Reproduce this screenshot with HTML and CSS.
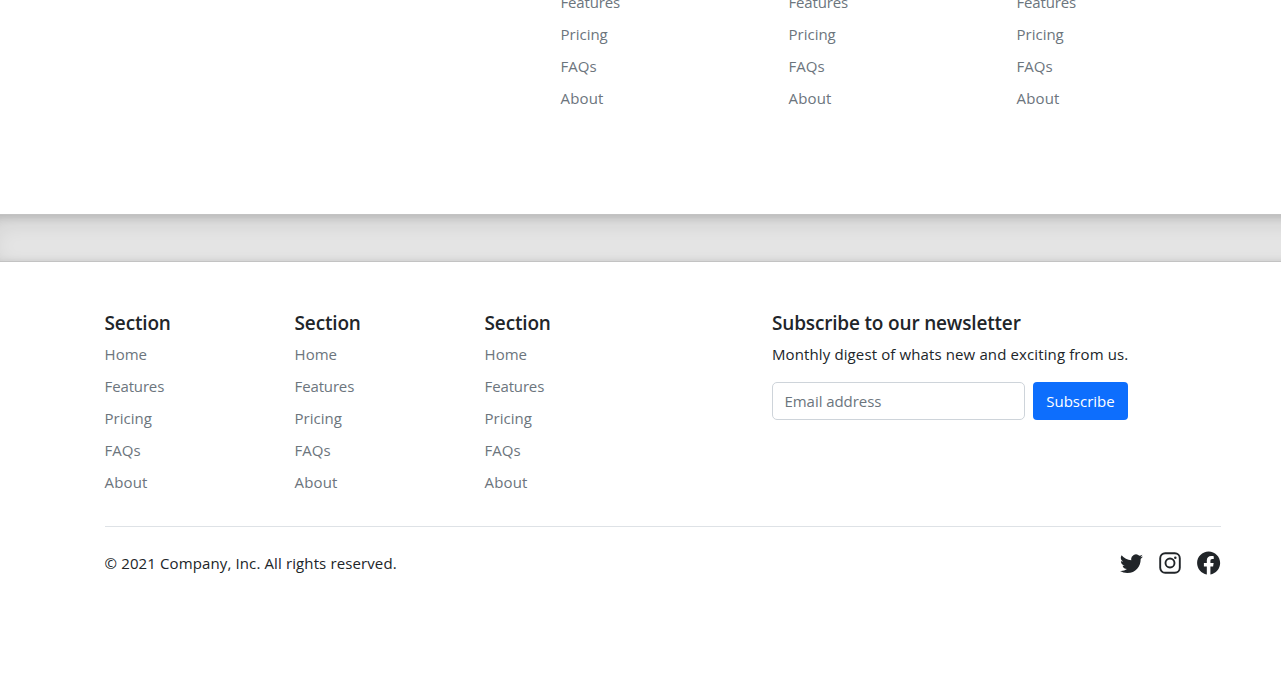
FILE: index.html
```html
<!DOCTYPE html>
<html lang="en">
<head>
<meta charset="utf-8">
<title>Footers</title>
<link rel="stylesheet" href="styles.css">
</head>
<body>
<section class="footer-top">
  <ul class="links"><li><a class="w-features">Features</a></li><li><a>Pricing</a></li><li><a>FAQs</a></li><li><a class="w-about">About</a></li></ul>
  <ul class="links"><li><a class="w-features">Features</a></li><li><a>Pricing</a></li><li><a>FAQs</a></li><li><a class="w-about">About</a></li></ul>
  <ul class="links"><li><a class="w-features">Features</a></li><li><a>Pricing</a></li><li><a>FAQs</a></li><li><a class="w-about">About</a></li></ul>
</section>
<div class="divider"></div>
<footer class="footer">
  <div class="row">
    <div class="col"><h5>Section</h5><ul class="links"><li><a>Home</a></li><li><a class="w-features">Features</a></li><li><a>Pricing</a></li><li><a>FAQs</a></li><li><a class="w-about">About</a></li></ul></div>
    <div class="col"><h5>Section</h5><ul class="links"><li><a>Home</a></li><li><a class="w-features">Features</a></li><li><a>Pricing</a></li><li><a>FAQs</a></li><li><a class="w-about">About</a></li></ul></div>
    <div class="col"><h5>Section</h5><ul class="links"><li><a>Home</a></li><li><a class="w-features">Features</a></li><li><a>Pricing</a></li><li><a>FAQs</a></li><li><a class="w-about">About</a></li></ul></div>
    <form class="newsletter">
      <h5>Subscribe to our newsletter</h5>
      <p>Monthly digest of whats new and exciting from us.</p>
      <div class="signup"><input class="email" type="text" placeholder="Email address"><button class="btn" type="button">Subscribe</button></div>
    </form>
  </div>
  <div class="bottom">
    <p>© 2021 Company, Inc. All rights reserved.</p>
    <div class="social">
      <svg width="23" height="24" viewBox="0 0 16 16"><path d="M5.026 15c6.038 0 9.341-5.003 9.341-9.334 0-.14 0-.282-.006-.422A6.685 6.685 0 0 0 16 3.542a6.658 6.658 0 0 1-1.889.518 3.301 3.301 0 0 0 1.447-1.817 6.533 6.533 0 0 1-2.087.793A3.286 3.286 0 0 0 7.875 6.03a9.325 9.325 0 0 1-6.767-3.429 3.289 3.289 0 0 0 1.018 4.382A3.323 3.323 0 0 1 .64 6.575v.045a3.288 3.288 0 0 0 2.632 3.218 3.203 3.203 0 0 1-.865.115 3.23 3.23 0 0 1-.614-.057 3.283 3.283 0 0 0 3.067 2.277A6.588 6.588 0 0 1 .78 13.58a6.32 6.32 0 0 1-.78-.045A9.344 9.344 0 0 0 5.026 15z"/></svg>
      <svg width="22" height="24" viewBox="0 0 22 24"><g fill="none" stroke="#212529" stroke-width="1.9"><rect x="1.2" y="2.2" width="19.6" height="19.6" rx="5"/><circle cx="11" cy="12" r="4.5"/></g><circle cx="16.3" cy="6.7" r="1.25"/></svg>
      <svg width="24" height="24" viewBox="0 0 24 24"><path transform="translate(0.1 0.5) scale(1.44)" d="M16 8.049c0-4.446-3.582-8.05-8-8.05C3.58 0-.002 3.603-.002 8.05c0 4.017 2.926 7.347 6.75 7.951v-5.625h-2.03V8.05H6.75V6.275c0-2.017 1.195-3.131 3.022-3.131.876 0 1.791.157 1.791.157v1.98h-1.009c-.993 0-1.303.621-1.303 1.258v1.51h2.218l-.354 2.326H9.25V16c3.824-.604 6.75-3.934 6.75-7.951z"/></svg>
    </div>
  </div>
</footer>
</body>
</html>
```
FILE: styles.css
```css
* { box-sizing: border-box; }
body { margin: 0; height: 681px; overflow: hidden; background: #fff; color: #212529; font: 15px/24px "Open Sans", "Noto Sans", sans-serif; letter-spacing: 0; }
h5, p, ul { margin: 0; padding: 0; }
ul { list-style: none; }
.footer-top { height: 214px; display: flex; padding-left: 560.5px; }
.footer-top .links { width: 228px; margin-top: -10px; }
.links li { height: 24px; margin-bottom: 8px; white-space: nowrap; }
.links a { color: #6c757d; }
.w-features { letter-spacing: -0.15px; }
.w-about { letter-spacing: 0.15px; }
.divider { width: 1320px; height: 48px; margin-left: -8px; background: rgba(0,0,0,.1); border: solid rgba(0,0,0,.15); border-width: 1px 0; box-shadow: inset 0 .5em 1.5em rgba(0,0,0,.1), inset 0 .125em .5em rgba(0,0,0,.15); font-size: 16px; }
.footer { padding: 48px 60px 0 104.6px; }
.row { display: flex; }
.col { width: 190px; }
h5 { font-size: 19px; font-weight: 600; line-height: 24px; padding-top: 1px; margin-bottom: 7px; letter-spacing: -0.17px; white-space: nowrap; }
.newsletter { width: 356px; margin-left: 97.4px; }
.newsletter p { white-space: nowrap; margin-bottom: 16px; letter-spacing: 0.12px; }
.signup { display: flex; gap: 8px; }
.email { width: 253px; height: 38px; padding: 6px 11.5px; border: 1px solid #ced4da; border-radius: 5px; font: inherit; letter-spacing: -0.05px; }
.email::placeholder { color: #6c757d; opacity: 1; }
.btn { width: 95px; height: 38px; padding: 0; border: 0; border-radius: 4px; background: #0d6efd; color: #fff; font: inherit; letter-spacing: 0; }
.bottom { display: flex; justify-content: space-between; margin-top: 24px; padding-top: 24px; border-top: 1px solid #dee2e6; }
.bottom p { letter-spacing: 0.12px; }
.social { display: flex; gap: 16px; }
.social svg { fill: #212529; }
```
